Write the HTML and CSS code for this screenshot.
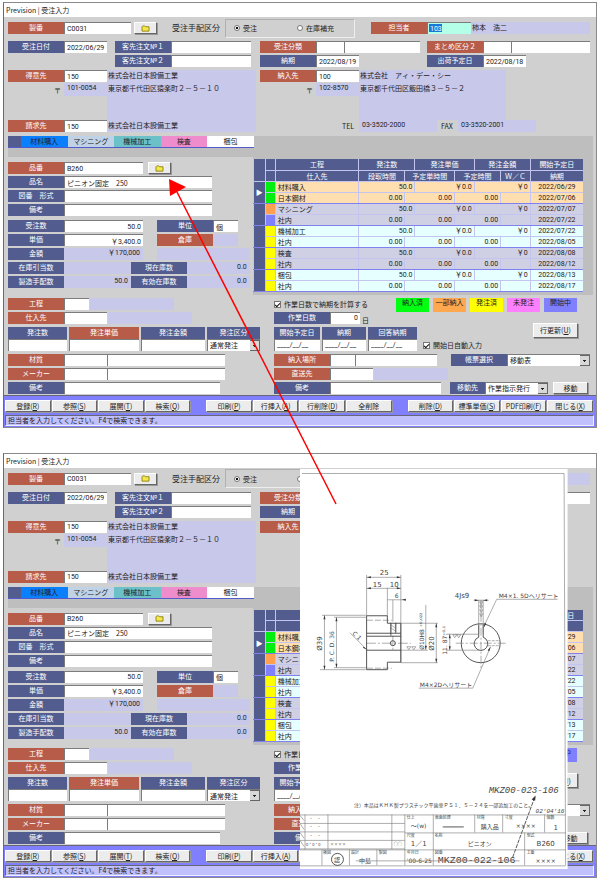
FILE: index.html
```
<!DOCTYPE html>
<html lang="ja">
<head>
    <meta charset="UTF-8">
    <meta name="viewport" content="width=device-width, initial-scale=1.0">
    <title>Prevision | 受注入力</title>
    <link rel="stylesheet" href="styles.css">
</head>
<body>

<div class="page">
    <section class="window" id="before"></section>

    <section class="window" id="after">
        <!-- 図面ビューア -->
        <svg class="drawing" viewBox="300 469 268 401" role="img" aria-label="ピニオン図面">
            <rect class="paper" x="300" y="469" width="268" height="401"/>
            <path class="thin" d="M302 473.500H564.500L566 866"/>

            <!-- 側面図 -->
            <g class="thin">
                <path d="M366.700 575V616M401 575V663M366.700 577.500H401M366.700 588.500H401M387.500 588V616M387.500 600H406M393 600V622"/>
                <path d="M324.500 615.500V670M322 615.500H366M320 670H366M336.500 617.500V668M334 617.500H366M334 668H366"/>
                <path d="M350 633L367 650M401 623.500H438M401 663H438M436.500 623.500V663M426 605V650.500M401 650.500H428"/>
                <path stroke-dasharray="6 2" d="M367 620.500H392M367 668.500H392"/>
                <path stroke-dasharray="10 2 2 2" d="M366 643.500H411M393 636V652"/>
                <path d="M391 624V633M395.500 624V633M391 625L395 628M391 628L395 631"/>
            </g>
            <path class="thick" d="M366.700 616V670H387.500V662.500H401V623.500H387.500V616ZM367 633.500H401M367 636.500H401M367 650.500H401M391 623V636M396 623V633"/>
            <circle class="thick" cx="393" cy="643.500" r="2.500"/>
            <path class="fill" d="M367 577.500l4-1v2zM401 577.500l-4-1v2zM367 588.500l4-1v2zM401 588.500l-4-1v2zM324.500 615.500l-1 4h2zM324.500 670l-1-4h2zM336.500 617.500l-1 4h2zM336.500 668l-1-4h2zM426 650l-1-4h2zM436.500 623.500l-1 4h2zM436.500 663l-1-4h2zM367 650l-4-2 1-1zM402 600l4-1v2z"/>
            <g class="dim">
                <text class="big" x="380" y="575">25</text>
                <text class="big" x="373" y="587">15</text>
                <text class="big" x="390" y="587">10</text>
                <text x="395" y="598">6</text>
                <text class="big" transform="translate(322 651) rotate(-90)">Ø39</text>
                <text transform="translate(334 662) rotate(-90)">P. C. D. 36</text>
                <text transform="translate(352 634) rotate(45)">C 1</text>
                <text transform="translate(424 650) rotate(-90)">Ø10H8 ⁺⁰·⁰²²</text>
                <text class="big" transform="translate(434 651) rotate(-90)">Ø20</text>
            </g>
            <path class="thin" d="M407 647h4l-2 3zM412 647h4l-2 3z"/>

            <!-- 正面図 -->
            <circle class="thick" cx="481" cy="643.500" r="19.500"/>
            <path class="thick" d="M479 637.500A6.800 6.800 0 1 0 483.500 637.500V625M479 637.500V625"/>
            <g class="thin">
                <path d="M479 600V634M483.500 600V634M474 600.500H489M480 602h3l-1.500 3zM480 606h3l-1.500 3zM480 610h3l-1.500 3zM480 614h3l-1.500 3z"/>
                <path d="M558 599.500H497L484 627M419 688.500H473L491 647M450 634V650.500M446 634.500H479M446 650.500H479"/>
                <path d="M453 635h4l-2 3zM457 635h4l-2 3z"/>
                <path stroke-dasharray="8 2 2 2" d="M456 643.500H506M481.300 600V668"/>
                <path stroke-dasharray="3 1" d="M488 641H500M488 646H500"/>
            </g>
            <path class="fill" d="M479 600.500l-4-1v2zM483.500 600.500l4-1v2zM484 628l1-5 1.500 1zM450 634.500l-1 4h2zM450 650.500l-1-4h2zM491 647l-3 3.500 1.500 1z"/>
            <g class="dim">
                <text class="big" x="455" y="598">4Js9</text>
                <text x="499" y="598">M4×1. 5Dヘリサート</text>
                <text x="420" y="687">M4×2Dヘリサート</text>
                <text transform="translate(447 655) rotate(-90)">11. 87⁺⁰·¹</text>
            </g>

            <text class="note" x="354" y="808">注）本品はＫＨＫ製プラスチック平歯車ＰＳ１．５－２４を一部追加工のこと。</text>
            <text class="hand" x="489" y="794">MKZ00-023-106</text>
            <text class="hand hand-date" x="536" y="814">02'04'16</text>
            <path class="thick" stroke-dasharray="4 1" d="M513 858L535 798"/>
            <path class="fill" d="M536 796l-4 4 3.500 1.200z"/>

            <!-- 表題欄 -->
            <path class="thin" d="M300 815.500H566M300 824H405M300 832.500H405M300 841H405M300 849.500H405M405 833.500H566M300 850.500H566M300 866.500H566"/>
            <path class="thin" d="M305 815V850M328 815V850M392 815V850M405 815V866M433.500 815V866M475 815V833M503 815V833M545 815V833M525 833V866M322 850V866M349.500 850V866M377 850V866"/>
            <path class="thin" d="M300 816l4 5M300 824l4 6M300 833l4 6M300 841l4 6"/>
            <path class="thick" d="M443 827.500H464"/>
            <g class="cap">
                <text x="407" y="820">仕上</text>
                <text x="435" y="820">表面処理</text>
                <text x="477" y="820">材質</text>
                <text x="505" y="820">寸度</text>
                <text x="547" y="820">個数</text>
                <text x="407" y="838">尺度</text>
                <text x="435" y="838">名称</text>
                <text x="527" y="838">型式</text>
                <text x="407" y="855">年月日</text>
                <text x="435" y="855">図番</text>
                <text x="527" y="855">工番</text>
                <text x="323" y="855">検図</text>
                <text x="351" y="855">設計</text>
                <text x="379" y="855">製図</text>
                <text x="309" y="822">・　・</text>
                <text x="309" y="830">・　・</text>
                <text x="309" y="839">・　・</text>
                <text x="306" y="847">0・0・0</text>
                <text x="330" y="847">××××</text>
                <text x="394" y="847">○○</text>
            </g>
            <g class="dim">
                <text x="411" y="829">～(w)</text>
                <text x="481" y="830">購入品</text>
                <text x="516" y="829">××××</text>
                <text class="big" x="554" y="831">1</text>
                <text class="big" x="411" y="847">1／1</text>
                <text x="468" y="847">ピニオン</text>
                <text class="big" x="537" y="847">B260</text>
                <text x="407" y="864">'00-6-25</text>
                <text x="536" y="864">××××</text>
                <text x="359" y="864">中島</text>
                <text x="334" y="863">認</text>
            </g>
            <text class="number" x="438" y="864">MKZ00-022-106</text>
            <path class="thin" d="M356 861.500H520"/>
            <circle class="thick" cx="337.500" cy="860" r="6"/>
        </svg>
    </section>

    <svg class="arrow" viewBox="0 0 600 882" aria-hidden="true">
        <path d="M177 192L336 504" stroke="#f00" stroke-width="1.500" fill="none"/>
        <path d="M169 179L186 187L170 196Z" fill="#f00"/>
    </svg>
</div>

<template id="orderForm">
    <header class="titlebar">Prevision | 受注入力</header>
    <form class="order">
        <div class="panel head">
            <div class="row top-row">
                <label class="lb red" for="seiban">製番</label>
                <input class="w-code" id="seiban" value="C0031">
                <button type="button" class="btn folder" aria-label="製番検索"><svg viewBox="0 0 10 8"><path d="M1 7V2l1-1h2l1 1h4v5z" fill="#f4e84a" stroke="#8c7c10"/></svg></button>
                <span class="caption">受注手配区分</span>
                <div class="choice" role="radiogroup" aria-label="受注手配区分">
                    <input type="radio" id="kubun1" name="kubun" checked><label for="kubun1">受注</label>
                    <input type="radio" id="kubun2" name="kubun"><label for="kubun2">在庫補充</label>
                </div>
                <label class="lb red" for="tanto">担当者</label>
                <input class="w-staff" id="tanto" value="103">
                <output class="out grow">柿本　浩二</output>
            </div>

            <div class="halves">
                <div class="row order-no">
                    <label class="lb" for="juchubi">受注日付</label>
                    <input class="w-date" id="juchubi" value="2022/06/29">
                    <div class="rows grow">
                        <div class="row"><label class="lb" for="chumon1">客先注文№１</label><input class="grow" id="chumon1"></div>
                        <div class="row"><label class="lb" for="chumon2">客先注文№２</label><input class="grow" id="chumon2"></div>
                    </div>
                </div>
                <div class="pair">
                    <div class="rows">
                        <div class="row"><label class="lb red" for="bunrui">受注分類</label><input class="w-short" id="bunrui"><input class="grow" aria-label="受注分類名"></div>
                        <div class="row"><label class="lb" for="noki">納期</label><input class="w-date" id="noki" value="2022/08/19"></div>
                    </div>
                    <div class="rows">
                        <div class="row"><label class="lb red" for="matome">まとめ区分２</label><input class="w-short" id="matome"><input class="grow" aria-label="まとめ区分名"></div>
                        <div class="row"><label class="lb" for="shukka">出荷予定日</label><input class="w-date" id="shukka" value="2022/08/18"></div>
                    </div>
                </div>

                <div class="address">
                    <label class="lb red" for="tokui">得意先</label>
                    <input id="tokui" value="150">
                    <output class="out">株式会社日本設備工業</output>
                    <span class="post">〒</span>
                    <output class="out num">101-0054</output>
                    <output class="out">東京都千代田区猿楽町２－５－１０</output>
                    <output class="out memo"></output>
                    <label class="lb red" for="seikyu">請求先</label>
                    <input id="seikyu" value="150">
                    <output class="out">株式会社日本設備工業</output>
                </div>
                <div>
                    <div class="address delivery">
                        <label class="lb red" for="nonyu">納入先</label>
                        <input id="nonyu" value="100">
                        <output class="out">株式会社　アィ・デー・シー</output>
                        <span class="post">〒</span>
                        <output class="out num">102-8570</output>
                        <output class="out">東京都千代田区飯田橋３－５－２</output>
                        <output class="out memo"></output>
                    </div>
                    <div class="row tel">
                        <span>TEL</span><output class="out num">03-3520-2000</output>
                        <span>FAX</span><output class="out num">03-3520-2001</output>
                    </div>
                </div>
            </div>
        </div>

        <div class="band">
            <div class="steps">
                <span class="mark"></span>
                <span class="buy">材料購入</span>
                <span class="machining">マシニング</span>
                <span class="process">機械加工</span>
                <span class="check">検査</span>
                <span class="pack">梱包</span>
            </div>
        </div>

        <div class="middle">
            <div class="rows item">
                <div class="row"><label class="lb red" for="hinban">品番</label><input class="w-qty" id="hinban" value="B260"><button type="button" class="btn folder" aria-label="品番検索"><svg viewBox="0 0 10 8"><path d="M1 7V2l1-1h2l1 1h4v5z" fill="#f4e84a" stroke="#8c7c10"/></svg></button></div>
                <div class="row long"><label class="lb" for="hinmei">品名</label><input class="grow jp" id="hinmei" value="ピニオン固定　250"></div>
                <div class="row long"><label class="lb" for="zuban">図番　形式</label><input class="grow" id="zuban"></div>
                <div class="row long"><label class="lb" for="biko1">備考</label><input class="grow" id="biko1"></div>
                <div class="row space"><label class="lb" for="suryo">受注数</label><input class="w-qty right" id="suryo" value="50.0"><label class="lb second" for="tani">単位</label><input class="w-unit jp" id="tani" value="個"></div>
                <div class="row"><label class="lb" for="tanka">単価</label><input class="w-qty right" id="tanka" value="￥3,400.0"><span class="lb red second">倉庫</span><output class="out w-unit"></output></div>
                <div class="row"><span class="lb">金額</span><output class="out num w-qty right">￥170,000</output><output class="out grow second"></output></div>
                <div class="row"><span class="lb">在庫引当数</span><output class="out num w-code right"></output><span class="lb">現在庫数</span><output class="out num grow right">0.0</output></div>
                <div class="row"><span class="lb">製造手配数</span><output class="out num w-code right">50.0</output><span class="lb">有効在庫数</span><output class="out num grow right">0.0</output></div>
            </div>

            <div class="grid-box">
                <table class="list">
                    <colgroup>
                        <col class="c-sel"><col class="c-state"><col class="c-name">
                        <col class="c-a"><col class="c-b"><col class="c-c"><col class="c-d"><col class="c-e"><col class="c-f">
                        <col class="c-date">
                    </colgroup>
                    <thead>
                        <tr><th rowspan="2"></th><th></th><th>工程</th><th colspan="2">発注数</th><th colspan="2">発注単価</th><th colspan="2">発注金額</th><th>開始予定日</th></tr>
                        <tr><th></th><th>仕入先</th><th>段取時間</th><th colspan="2">予定単時間</th><th colspan="2">予定時間</th><th>Ｗ／Ｃ</th><th>納期</th></tr>
                    </thead>
                    <tbody></tbody>
                </table>
            </div>
        </div>

        <div class="panel detail">
            <div class="rows">
                <div class="row"><label class="lb red" for="kotei">工程</label><input class="w-unit" id="kotei"><output class="out w-name"></output></div>
                <div class="row"><label class="lb red" for="shiire">仕入先</label><input class="w-date" id="shiire"><output class="out w-name"></output></div>
                <div class="order-line">
                    <label class="lb" for="hsu">発注数</label>
                    <label class="lb red" for="htanka">発注単価</label>
                    <label class="lb" for="hkin">発注金額</label>
                    <label class="lb" for="hkubun">発注区分</label>
                    <input id="hsu"><input id="htanka"><input id="hkin">
                    <select id="hkubun"><option>通常発注</option></select>
                </div>
                <div class="row material"><label class="lb red" for="zai">材質</label><input class="w-date" id="zai"><input class="grow" aria-label="材質名"></div>
                <div class="row material"><label class="lb red" for="maker">メーカー</label><input class="w-date" id="maker"><input class="grow" aria-label="メーカー名"></div>
                <div class="row material-note"><label class="lb" for="biko2">備考</label><input class="grow" id="biko2"></div>
            </div>

            <div class="rows">
                <div class="row">
                    <input type="checkbox" id="keisan" checked><label for="keisan">作業日数で納期を計算する</label>
                    <div class="legend">
                        <span class="done">納入済</span><span class="part">一部納入</span><span class="ordered">発注済</span><span class="none">未発注</span><span class="started">開始中</span>
                    </div>
                </div>
                <div class="row"><label class="lb" for="nissu">作業日数</label><input class="w-days right" id="nissu" value="0"><span class="unit">日</span></div>
                <div class="row schedule">
                    <div class="dates">
                        <label class="lb" for="kaishi">開始予定日</label><label class="lb" for="noki2">納期</label><label class="lb" for="kaito">回答納期</label>
                        <input id="kaishi" value="____/__/__"><input id="noki2" value="____/__/__"><input id="kaito" value="____/__/__">
                    </div>
                    <div class="auto"><input type="checkbox" id="auto" checked><label for="auto">開始日自動入力</label></div>
                    <button type="button" class="btn update">行更新(<u>U</u>)</button>
                </div>
                <div class="row"><label class="lb red" for="basho">納入場所</label><input class="w-unit" id="basho"><input class="grow" aria-label="納入場所名"><label class="lb report" for="chohyo">帳票選択</label><select class="w-report" id="chohyo"><option>移動表</option></select></div>
                <div class="row"><label class="lb red" for="chokuso">直送先</label><input class="w-date" id="chokuso"><output class="out w-direct"></output></div>
                <div class="row"><label class="lb" for="biko3">備考</label><input class="grow" id="biko3"><label class="lb move-lb" for="ido">移動先</label><select class="w-move" id="ido"><option>作業指示発行</option></select><button type="button" class="btn move">移動</button></div>
            </div>
        </div>

        <footer class="toolbar">
            <div class="buttons">
                <div class="group">
                    <button type="button" class="btn">登録(<u>R</u>)</button>
                    <button type="button" class="btn">参照(<u>S</u>)</button>
                    <button type="button" class="btn">展開(<u>T</u>)</button>
                    <button type="button" class="btn">検索(<u>Q</u>)</button>
                </div>
                <div class="group">
                    <button type="button" class="btn">印刷(<u>P</u>)</button>
                    <button type="button" class="btn">行挿入(<u>A</u>)</button>
                    <button type="button" class="btn">行削除(<u>D</u>)</button>
                    <button type="button" class="btn">全削除</button>
                </div>
                <div class="group">
                    <button type="button" class="btn">削除(<u>D</u>)</button>
                    <button type="button" class="btn">標準単価(<u>S</u>)</button>
                    <button type="button" class="btn">PDF印刷(<u>F</u>)</button>
                    <button type="button" class="btn">閉じる(<u>X</u>)</button>
                </div>
            </div>
            <div class="status">担当者を入力してください。F4で検索できます。</div>
        </footer>
    </form>
</template>

<script src="app.js"></script>
</body>
</html>
```
FILE: styles.css
```
* {
    box-sizing: border-box;
}
body {
    margin: 0;
    background: #fff;
    color: #222;
    font-family: "Noto Sans CJK JP", sans-serif;
    font-size: 7px;
    line-height: 12px;
}
.page {
    position: relative;
    padding: 2px 3px;
}
.window {
    position: relative;
    border: 1px solid #8a8a8a;
    border-left-color: #5f6f6f;
}
.window + .window {
    margin-top: 25px;
}
.titlebar {
    height: 14px;
    padding-left: 2px;
    line-height: 14px;
    background: #fff;
}
.order {
    background: #d0d0d0;
}

/* 共通部品 */
input, select, button {
    font-family: inherit;
    font-size: 7px;
    color: #222;
    margin: 0;
    border-radius: 0;
}
.row {
    display: flex;
    height: 12px;
}
.rows {
    display: flex;
    flex-direction: column;
    gap: 2px;
    min-width: 0;
}
.grow {
    flex: 1;
    min-width: 0;
}
.lb {
    flex: 0 0 56px;
    height: 12px;
    background: #525c8e;
    color: #fff;
    text-align: center;
    white-space: nowrap;
    line-height: 11px;
}
.lb.red {
    background: #b85c4a;
}
input:not([type]) {
    height: 12px;
    min-width: 0;
    padding: 0 2px;
    border: 0;
    border-top: 1px solid #7c7c7c;
    border-left: 1px solid #7c7c7c;
    background: #fff;
    font-family: "Liberation Sans Narrow", Roboto, "Noto Sans CJK JP", sans-serif;
    font-size: 7px;
}
input:not([type]).jp {
    font-family: "Noto Sans CJK JP", sans-serif;
}
input[type="checkbox"] {
    appearance: none;
    width: 7px;
    height: 7px;
    border: 1px solid #777;
    background: #fff;
}
input[type="checkbox"]:checked::after {
    content: "";
    display: block;
    width: 4px;
    height: 2px;
    margin-top: 1px;
    border: solid #111;
    border-width: 0 0 1px 1px;
    transform: rotate(-45deg);
}
input[type="radio"] {
    appearance: none;
    width: 6px;
    height: 6px;
    border: 1px solid #777;
    border-radius: 50%;
    background: #fff;
}
input[type="radio"]:checked {
    background: radial-gradient(#111 40%, #fff 50%);
}
select {
    appearance: none;
    height: 12px;
    padding: 0 2px;
    border: 0;
    border-top: 1px solid #7c7c7c;
    border-left: 1px solid #7c7c7c;
    background:
        linear-gradient(#222, #222) right 4px top 5px / 3px 1px no-repeat,
        linear-gradient(#222, #222) right 5px top 6px / 1px 1px no-repeat,
        linear-gradient(#d8d8d8, #d8d8d8) right 1px top 1px / 9px 9px no-repeat,
        linear-gradient(#666, #666) right 0 top 0 / 10px 11px no-repeat,
        #fff;
}
.out {
    display: block;
    height: 12px;
    padding-left: 1px;
    background: #c8c8ea;
    white-space: nowrap;
    line-height: 11px;
}
.num {
    padding-left: 3px;
    font-family: "Liberation Sans Narrow", Roboto, "Noto Sans CJK JP", sans-serif;
}
.right {
    text-align: right;
    padding-right: 3px;
}
.btn {
    padding: 0;
    border: 1px solid;
    border-color: #fff #666 #666 #fff;
    background: #ececec;
    line-height: 10px;
    text-align: center;
    white-space: nowrap;
    box-shadow: 1px 1px 0 #999;
}
.folder {
    width: 23px;
    height: 12px;
    line-height: 0;
}
.folder svg {
    width: 9px;
    height: 7px;
}
.w-code { width: 67px; }
.w-staff { width: 44px; }
.w-date { width: 43px; }
.w-short { width: 28px; }
.w-qty { width: 79px; }
.w-unit { width: 25px; }
.w-days { width: 30px; }
.w-name { width: 84px; margin-left: 1px; }
.w-direct { width: 74px; margin-left: 1px; }
.w-report { width: 83px; }
.w-move { width: 63px; }

/* 上段 */
.panel {
    padding: 0 6px 0 4px;
}
.head {
    padding-top: 1px;
}
.top-row {
    height: 20px;
    align-items: center;
}
.top-row .folder {
    margin: 0 15px 0 3px;
}
.caption {
    width: 49px;
    font-size: 8px;
    white-space: nowrap;
}
.choice {
    display: flex;
    align-items: center;
    width: 130px;
    height: 19px;
    margin: 0 16px 0 4px;
    padding-left: 8px;
    border: 1px solid;
    border-color: #b0b0b0 #eee #eee #b0b0b0;
}
.choice label {
    margin: 0 40px 0 3px;
    white-space: nowrap;
}
.choice label:last-child {
    margin-right: 0;
}
.w-staff:not([type]) {
    background: linear-gradient(#1878d8, #1878d8) 1px 1px / 13px 8px no-repeat #b4ffe8;
    color: #fff;
}
.halves {
    display: grid;
    grid-template-columns: 248fr 330fr;
    gap: 3px 4px;
    margin-top: 3px;
}
.halves > * {
    min-width: 0;
}
.order-no {
    height: 26px;
    padding-right: 5px;
}
.order-no .rows {
    margin-left: 8px;
}
.pair {
    display: grid;
    grid-template-columns: 160fr 163fr;
    gap: 7px;
}
.address {
    display: grid;
    grid-template-columns: 56px 43px 1fr;
    grid-template-rows: 13px 13px 24px 12px;
}
.address .out {
    height: auto;
}
.delivery {
    grid-template-rows: 13px 13px 24px;
    margin-right: 84px;
}
.post {
    padding-right: 3px;
    text-align: right;
    line-height: 14px;
}
.memo {
    grid-column: 3;
}
.tel {
    padding-left: 82px;
}
.tel span {
    width: 17px;
}
.tel .out {
    width: 78px;
    margin-right: 4px;
}

/* 工程バー */
.band {
    height: 21px;
    margin: 4px 3px 0 4px;
    background: #bebebe;
}
.steps {
    display: grid;
    grid-template-columns: 13px repeat(5, 1fr);
    width: 42%;
    border-bottom: 1px solid #525ccc;
    text-align: center;
    line-height: 11px;
}
.mark { background: #525c8e; }
.buy { background: #0a80ff; }
.machining { background: #c0d2e6; }
.process { background: #6cc0c8; }
.check { background: #ee8ccc; }
.pack { background: #fff; }

/* 品目と工程一覧 */
.middle {
    display: grid;
    grid-template-columns: 243fr 342fr;
    gap: 3px;
    padding: 0 3px 0 4px;
}
.item {
    padding-top: 5px;
}
.item .folder {
    margin-left: 5px;
}
.long {
    padding-right: 38px;
}
.space {
    margin-top: 2px;
}
.second {
    margin-left: 14px;
}
.grid-box {
    min-width: 0;
    padding: 2px 10px 3px 0;
    background: #bebebe;
}
.list {
    width: 100%;
    table-layout: fixed;
    border-collapse: collapse;
    line-height: 10px;
}
.c-sel { width: 12px; }
.c-state { width: 10px; }
.c-a { width: 14%; }
.c-b { width: 3%; }
.c-c { width: 12%; }
.c-d { width: 6%; }
.c-e { width: 8%; }
.c-f { width: 9%; }
.c-date { width: 16%; }
.list th, .list td {
    height: 11px;
    padding: 0 2px;
    border: 1px solid #c4c4f0;
    border-width: 0 0 1px 1px;
    white-space: nowrap;
}
.list th {
    padding: 0;
    background: #525c8e;
    color: #fff;
    font-weight: normal;
}
.list td.val {
    font-family: "Liberation Sans Narrow", Roboto, "Noto Sans CJK JP", sans-serif;
    text-align: right;
}
.list td.date {
    text-align: center;
}
.list td.sel {
    padding: 0;
    background: #525c8e;
    color: #fff;
    text-align: center;
}
.list tr.last td, .list td.sel {
    border-bottom-color: #8080ee;
}
.orange { background: #ffdfb0; }
.violet { background: #d0d0e4; }
.cyan { background: #e6ffff; }
.st-done { background: #00ee10; }
.st-part { background: #ffa050; }
.st-ordered { background: #ffff00; }
.st-started { background: #8080ff; }

/* 下段 */
.detail {
    display: grid;
    grid-template-columns: 252fr 316fr;
    gap: 14px;
    padding-top: 3px;
    padding-bottom: 1px;
}
.order-line {
    display: grid;
    grid-template-columns: 59fr 70fr 64fr 53fr;
    gap: 0 2px;
    margin: 1px 0;
}
.order-line > *, .dates > * {
    min-width: 0;
    width: 100%;
}
.material {
    padding-right: 35px;
}
.material-note {
    padding-right: 40px;
}
.detail input[type="checkbox"] {
    margin: 3px 3px 0 0;
}
.legend {
    display: flex;
    gap: 4px;
    height: 14px;
    margin: 0 13px 0 auto;
    text-align: center;
    line-height: 8px;
}
.legend span {
    width: 33px;
}
.done { background: #00ff10; }
.part { background: #ffa850; }
.ordered { background: #ffff00; }
.none { background: #ff80ff; }
.started { background: #8080ff; }
.unit {
    padding: 2px;
}
.schedule {
    height: 24px;
    margin: 1px 0;
}
.dates {
    display: grid;
    grid-template-columns: 46px 44px 49px;
    gap: 0 2px;
}
.auto {
    display: flex;
    align-self: flex-end;
    margin-left: 6px;
}
.update {
    width: 45px;
    height: 15px;
    margin: -4px 12px 0 auto;
}
.report {
    margin-left: 14px;
}
.move-lb {
    flex-basis: 35px;
    margin-left: 9px;
}
.move {
    width: 35px;
    height: 12px;
    margin: 0 2px 0 5px;
}

/* 下部ボタン */
.toolbar {
    height: 32px;
    padding: 4px 2px 0 1px;
    border-top: 1px solid #667;
    background: #8080ff;
}
.buttons {
    display: flex;
    gap: 16px;
    padding-right: 1px;
}
.group {
    display: flex;
    flex: 1;
    gap: 1px;
}
.group .btn {
    flex: 1 1 0;
    min-width: 0;
    height: 12px;
}
.status {
    height: 11px;
    margin-top: 3px;
    padding-left: 2px;
    border: 1px solid;
    border-color: #667 #eef #eef #667;
    background: #c0c0fc;
    line-height: 9px;
}

/* 図面 */
.drawing {
    position: absolute;
    top: 15px;
    left: 50%;
    width: 45.2%;
    z-index: 1;
}
.paper {
    fill: #fff;
}
.thin, .thick {
    fill: none;
    stroke: #777;
    stroke-width: 0.6;
}
.thick {
    stroke: #444;
    stroke-width: 0.9;
}
.fill {
    fill: #333;
}
.drawing text {
    fill: #444;
}
.dim {
    font-family: "DejaVu Sans", "Noto Sans CJK JP", sans-serif;
    font-size: 6px;
}
.big {
    font-size: 7px;
}
.cap {
    font-size: 4px;
}
.note {
    font-size: 5px;
}
.hand {
    font: italic 9px "Liberation Mono", monospace;
}
.hand-date {
    font-size: 6px;
}
.number {
    font: 10px "Liberation Mono", monospace;
}
.arrow {
    position: absolute;
    top: 0;
    left: 0;
    width: 100%;
    z-index: 2;
    pointer-events: none;
}
```
FILE: app.js
```
const steps = [
    { name: "材料購入", maker: "日本鋼材", color: "orange", state: ["done", "done"], start: "2022/06/29", end: "2022/07/06" },
    { name: "マシニング", maker: "社内", color: "violet", state: ["part", "started"], start: "2022/07/07", end: "2022/07/22" },
    { name: "機械加工", maker: "社内", color: "cyan", state: ["ordered", "ordered"], start: "2022/07/22", end: "2022/08/05" },
    { name: "検査", maker: "社内", color: "violet", state: ["ordered", "ordered"], start: "2022/08/08", end: "2022/08/12" },
    { name: "梱包", maker: "社内", color: "cyan", state: ["ordered", "ordered"], start: "2022/08/13", end: "2022/08/17" }
];

function stepRows(step, index) {
    return `
        <tr class="${step.color}">
            <td class="sel" rowspan="2">${index === 0 ? "▶" : ""}</td>
            <td class="st-${step.state[0]}"></td><td>${step.name}</td>
            <td class="val" colspan="2">50.0</td><td class="val" colspan="2">￥0.0</td><td class="val" colspan="2">￥0</td>
            <td class="val date">${step.start}</td>
        </tr>
        <tr class="${step.color} last">
            <td class="st-${step.state[1]}"></td><td>${step.maker}</td>
            <td class="val">0.00</td><td class="val" colspan="2">0.00</td><td class="val" colspan="2">0.00</td><td></td>
            <td class="val date">${step.end}</td>
        </tr>`;
}

// 画面ごとに id が重ならないようにする
function openForm(target) {
    const form = document.getElementById("orderForm").content.cloneNode(true);
    form.querySelectorAll("[id]").forEach(el => el.id = target.id + "-" + el.id);
    form.querySelectorAll("[for]").forEach(el => el.htmlFor = target.id + "-" + el.htmlFor);
    form.querySelectorAll("[name]").forEach(el => el.name = target.id + "-" + el.name);
    form.querySelector("tbody").innerHTML = steps.map(stepRows).join("");
    target.prepend(form);
}

openForm(document.getElementById("before"));
openForm(document.getElementById("after"));
```
